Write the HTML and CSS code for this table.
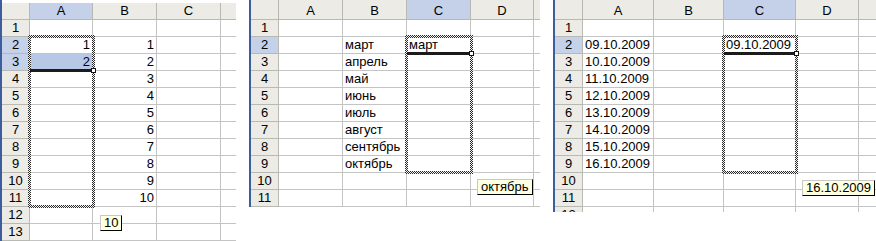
FILE: index.html
```html
<!DOCTYPE html>
<html lang="ru">
<head>
  <meta charset="UTF-8">
  <title>Автозаполнение</title>
  <link rel="stylesheet" href="styles.css">
</head>
<body>
  <!-- числа: тянем маркер от A2:A3 -->
  <div class="sheet s1">
    <div class="h"></div><div class="h hs">A</div><div class="h">B</div><div class="h">C</div><div class="h"></div>
    <div class="h">1</div><div></div><div></div><div></div><div></div>
    <div class="h hs">2</div><div class="n">1</div><div class="n">1</div><div></div><div></div>
    <div class="h hs">3</div><div class="n sel">2</div><div class="n">2</div><div></div><div></div>
    <div class="h">4</div><div></div><div class="n">3</div><div></div><div></div>
    <div class="h">5</div><div></div><div class="n">4</div><div></div><div></div>
    <div class="h">6</div><div></div><div class="n">5</div><div></div><div></div>
    <div class="h">7</div><div></div><div class="n">6</div><div></div><div></div>
    <div class="h">8</div><div></div><div class="n">7</div><div></div><div></div>
    <div class="h">9</div><div></div><div class="n">8</div><div></div><div></div>
    <div class="h">10</div><div></div><div class="n">9</div><div></div><div></div>
    <div class="h">11</div><div></div><div class="n">10</div><div></div><div></div>
    <div class="h">12</div><div></div><div></div><div></div><div></div>
    <div class="h">13</div><div></div><div></div><div></div><div></div>
    <div class="ants"></div>
    <div class="fill"></div>
    <div class="tip">10</div>
  </div>

  <!-- месяцы -->
  <div class="sheet s2">
    <div class="h"></div><div class="h">A</div><div class="h">B</div><div class="h hs">C</div><div class="h">D</div><div class="h"></div>
    <div class="h">1</div><div></div><div></div><div></div><div></div><div></div>
    <div class="h hs">2</div><div></div><div>март</div><div>март</div><div></div><div></div>
    <div class="h">3</div><div></div><div>апрель</div><div></div><div></div><div></div>
    <div class="h">4</div><div></div><div>май</div><div></div><div></div><div></div>
    <div class="h">5</div><div></div><div>июнь</div><div></div><div></div><div></div>
    <div class="h">6</div><div></div><div>июль</div><div></div><div></div><div></div>
    <div class="h">7</div><div></div><div>август</div><div></div><div></div><div></div>
    <div class="h">8</div><div></div><div>сентябрь</div><div></div><div></div><div></div>
    <div class="h">9</div><div></div><div>октябрь</div><div></div><div></div><div></div>
    <div class="h">10</div><div></div><div></div><div></div><div></div><div></div>
    <div class="h">11</div><div></div><div></div><div></div><div></div><div></div>
    <div class="ants"></div>
    <div class="fill"></div>
    <div class="tip">октябрь</div>
  </div>

  <!-- даты -->
  <div class="sheet s3">
    <div class="h"></div><div class="h">A</div><div class="h">B</div><div class="h hs">C</div><div class="h">D</div><div class="h"></div>
    <div class="h">1</div><div></div><div></div><div></div><div></div><div></div>
    <div class="h hs">2</div><div>09.10.2009</div><div></div><div>09.10.2009</div><div></div><div></div>
    <div class="h">3</div><div>10.10.2009</div><div></div><div></div><div></div><div></div>
    <div class="h">4</div><div>11.10.2009</div><div></div><div></div><div></div><div></div>
    <div class="h">5</div><div>12.10.2009</div><div></div><div></div><div></div><div></div>
    <div class="h">6</div><div>13.10.2009</div><div></div><div></div><div></div><div></div>
    <div class="h">7</div><div>14.10.2009</div><div></div><div></div><div></div><div></div>
    <div class="h">8</div><div>15.10.2009</div><div></div><div></div><div></div><div></div>
    <div class="h">9</div><div>16.10.2009</div><div></div><div></div><div></div><div></div>
    <div class="h">10</div><div></div><div></div><div></div><div></div><div></div>
    <div class="h">11</div><div></div><div></div><div></div><div></div><div></div>
    <div class="h">12</div><div></div><div></div><div></div><div></div><div></div>
    <div class="ants"></div>
    <div class="fill"></div>
    <div class="tip">16.10.2009</div>
  </div>
</body>
</html>
```

FILE: styles.css
```css
body {
  margin: 0;
  display: flex;
  align-items: flex-start;
  background: #fff;
  font-family: "Liberation Sans", Arial, sans-serif;
  font-size: 13px;
  color: #000;
}

.sheet {
  position: relative;
  display: grid;
  border-left: 2px solid #3d5e9e;
  overflow: hidden;
}
.sheet > div {
  border-right: 1px solid #c4c4c4;
  border-bottom: 1px solid #c4c4c4;
  padding: 0 2px;
  line-height: 16px;
  white-space: nowrap;
  overflow: hidden;
}

/* три листа */
.s1 {
  width: 234px;
  height: 238px;
  padding-top: 3px;
  grid-template-columns: 28px 63px 64px 64px 64px;
  grid-template-rows: repeat(14, 17px);
}
.s2 {
  width: 289px;
  height: 207px;
  margin-left: 13px;
  grid-template-columns: 28px 64px 64px 64px 63px 64px;
  grid-template-rows: 20px repeat(11, 17px);
}
.s3 {
  width: 321px;
  height: 212px;
  margin-left: 13px;
  grid-template-columns: 28px 71px 70px 72px 63px 64px;
  grid-template-rows: 20px repeat(12, 17px);
}

/* заголовки строк и столбцов */
.sheet .h {
  background: #ecebe6;
  border-color: #b9b9b4;
  text-align: center;
  padding: 0;
}
.s2 .h:nth-child(-n+6),
.s3 .h:nth-child(-n+6) {
  padding-top: 3px;
}
.sheet .hs {
  background: #c4d1e9;
}
.sheet .n {
  text-align: right;
}
.sheet .sel {
  background: #b7c8e7;
}

/* бегущая рамка копирования */
.sheet .ants {
  position: absolute;
  inset: -2px -2px -1px -2px;
  padding: 0;
  border: 3px solid transparent;
  background: repeating-conic-gradient(#2a2a2a 0 25%, #f4f4f4 0 50%) 0 0 / 2px 2px border-box;
  -webkit-mask: linear-gradient(#000 0 0) padding-box, linear-gradient(#000 0 0);
  -webkit-mask-composite: xor;
  mask: linear-gradient(#000 0 0) padding-box exclude, linear-gradient(#000 0 0);
  z-index: 2;
}
.s1 .ants { grid-column: 2 / 3; grid-row: 3 / 13; }
.s2 .ants,
.s3 .ants { grid-column: 4 / 5; grid-row: 3 / 11; }

/* маркер заполнения */
.sheet .fill {
  position: absolute;
  left: 0;
  right: 2px;
  bottom: -1px;
  height: 3px;
  padding: 0;
  border: 0;
  background: #1b1b1b;
  overflow: visible;
  z-index: 3;
}
.sheet .fill::after {
  content: "";
  position: absolute;
  right: -5px;
  top: -1px;
  width: 3px;
  height: 3px;
  border: 1px solid #111;
  background: #fff;
}
.s1 .fill { grid-column: 2 / 3; grid-row: 4 / 5; }
.s2 .fill,
.s3 .fill { grid-column: 4 / 5; grid-row: 3 / 4; }

/* подсказка со значением */
.sheet .tip {
  position: absolute;
  padding: 0 3px;
  line-height: 14px;
  background: #ffffe1;
  border: 1px solid #000;
  border-color: #c8c8c8 #000 #000 #c8c8c8;
  overflow: visible;
  z-index: 4;
}
.s1 .tip { grid-column: 3 / 4; grid-row: 13 / 14; left: 7px; top: 8px; }
.s2 .tip { grid-column: 5 / 6; grid-row: 11 / 12; left: 6px; top: 6px; }
.s3 .tip { grid-column: 5 / 6; grid-row: 11 / 12; left: 6px; top: 7px; }
```
